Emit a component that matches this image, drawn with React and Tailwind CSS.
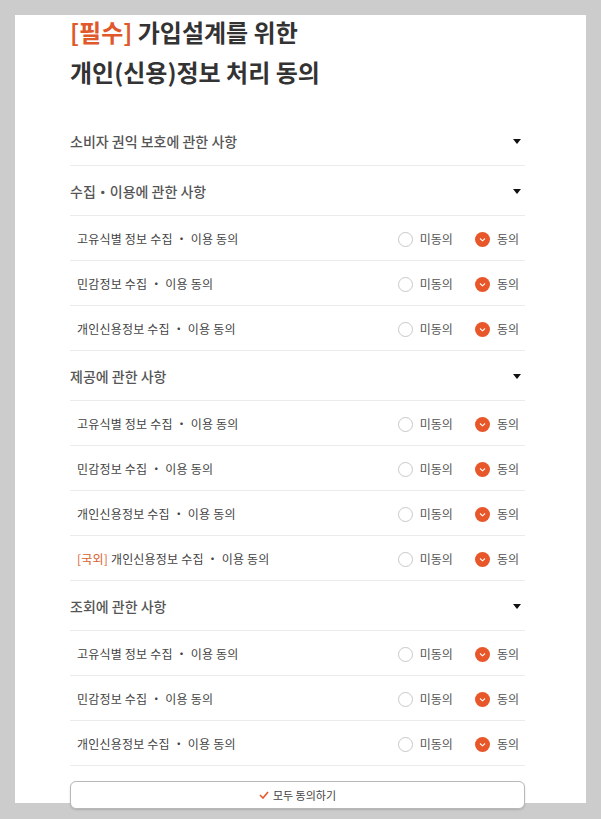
const sections = [
  { title: "소비자 권익 보호에 관한 사항", items: [] },
  {
    title: "수집・이용에 관한 사항",
    items: ["고유식별 정보 수집 ・ 이용 동의", "민감정보 수집 ・ 이용 동의", "개인신용정보 수집 ・ 이용 동의"],
  },
  {
    title: "제공에 관한 사항",
    items: [
      "고유식별 정보 수집 ・ 이용 동의",
      "민감정보 수집 ・ 이용 동의",
      "개인신용정보 수집 ・ 이용 동의",
      "[국외]개인신용정보 수집 ・ 이용 동의",
    ],
  },
  {
    title: "조회에 관한 사항",
    items: ["고유식별 정보 수집 ・ 이용 동의", "민감정보 수집 ・ 이용 동의", "개인신용정보 수집 ・ 이용 동의"],
  },
]

function Caret() {
  return (
    <svg width="8" height="5" viewBox="0 0 8 5" className="mr-[4px]">
      <path d="M0 0 L8 0 L4 5 Z" fill="#111" />
    </svg>
  )
}

function ItemRow({ label }) {
  const overseas = label.startsWith("[국외]")
  return (
    <div className="flex h-[45px] items-center justify-between border-b border-[#ebebeb] pl-[7px] pr-[6px] pt-[2px]">
      <span className="text-[12px] tracking-[0.2px] text-[#444]">
        {overseas ? (
          <>
            <span className="text-[#d9622b]">[국외]</span> {label.replace("[국외]", "")}
          </>
        ) : (
          label
        )}
      </span>
      <div className="flex items-center text-[12px] text-[#555]">
        <span className="h-[15px] w-[15px] rounded-full border border-[#c8c8c8] bg-white" />
        <span className="ml-[7px]">미동의</span>
        <span className="ml-[22px] flex h-[15px] w-[15px] items-center justify-center rounded-full bg-[#e8572a]">
          <svg width="7" height="5" viewBox="0 0 7 5">
            <path d="M1 1.5 L3.5 3.8 L6 1.5" fill="none" stroke="#fff" strokeWidth="1.1" />
          </svg>
        </span>
        <span className="ml-[7px]">동의</span>
      </div>
    </div>
  )
}

export default function App() {
  return (
    <div className="min-h-[819px] bg-[#cccccc] pt-[15px] font-['Noto_Sans_CJK_KR',sans-serif]">
      <div className="mx-[15px] h-[788px] bg-white pl-[55px] pr-[61px]">
        <h1 className="relative -top-[3px] text-[24px] font-bold leading-[40px] text-[#333]">
          <span className="text-[#e0592a]">[필수]</span> 가입설계를 위한
          <br />
          개인(신용)정보 처리 동의
        </h1>

        <div className="-mt-[3px] pt-[24px]">
          {sections.map((s) => (
            <div key={s.title}>
              <div className="flex h-[50px] items-center justify-between border-b border-[#ebebeb] pt-[1px]">
                <span className="text-[14px] font-medium text-[#555]">{s.title}</span>
                <Caret />
              </div>
              {s.items.map((it, i) => (
                <ItemRow key={i} label={it} />
              ))}
            </div>
          ))}
        </div>

        <button className="mt-[15px] flex h-[28px] w-full items-center justify-center gap-[4px] rounded-[6px] border border-[#b8b8b8] bg-white text-[11px] text-[#444] shadow-[0_1px_2px_rgba(0,0,0,0.15)]">
          <svg width="10" height="8" viewBox="0 0 10 8">
            <path d="M1 4 L4 7 L9 1" fill="none" stroke="#e8572a" strokeWidth="1.6" />
          </svg>
          모두 동의하기
        </button>
      </div>
    </div>
  )
}
